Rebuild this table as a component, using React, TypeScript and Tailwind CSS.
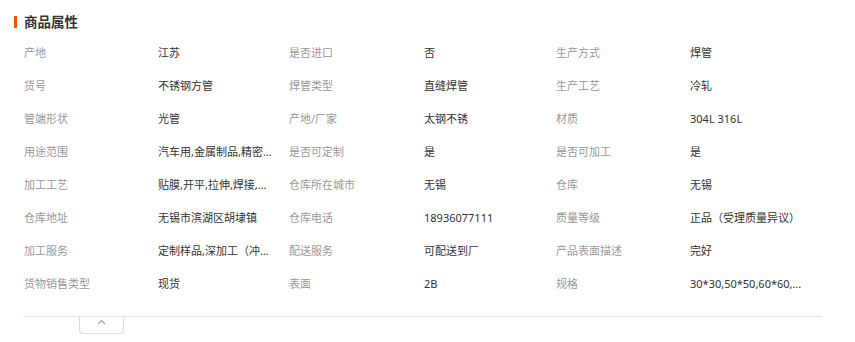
import React from "react";

const rows: string[][] = [
  ["产地", "江苏", "是否进口", "否", "生产方式", "焊管"],
  ["货号", "不锈钢方管", "焊管类型", "直缝焊管", "生产工艺", "冷轧"],
  ["管端形状", "光管", "产地/厂家", "太钢不锈", "材质", "304L 316L"],
  ["用途范围", "汽车用,金属制品,精密仪器,装饰", "是否可定制", "是", "是否可加工", "是"],
  ["加工工艺", "贴膜,开平,拉伸,焊接,折弯", "仓库所在城市", "无锡", "仓库", "无锡"],
  ["仓库地址", "无锡市滨湖区胡埭镇", "仓库电话", "18936077111", "质量等级", "正品（受理质量异议）"],
  ["加工服务", "定制样品,深加工（冲压、切割）", "配送服务", "可配送到厂", "产品表面描述", "完好"],
  ["货物销售类型", "现货", "表面", "2B", "规格", "30*30,50*50,60*60,80*80,100*100"],
];

export default function App() {
  return (
    <div
      className="w-[855px] h-[342px] bg-white text-[11px] overflow-hidden"
      style={{ fontFamily: '"Noto Sans", "Noto Sans CJK SC", sans-serif' }}
    >
      {/* Title */}
      <div className="flex items-center h-[20px] mt-[12px] pl-[14px]">
        <span className="w-[3px] h-[12px] bg-[#ff5000]" />
        <h2 className="ml-[7px] text-[13.5px] font-bold text-[#333] leading-[20px]">商品属性</h2>
      </div>

      {/* Attribute table */}
      <div className="mt-[4px] pl-[24px]">
        {rows.map((row, i) => (
          <div
            key={i}
            className="grid grid-cols-[134px_131px_135px_132px_134px_132px] h-[33px] items-center"
          >
            {row.map((cell, j) => (
              <span
                key={j}
                className={`truncate leading-[16px] ${
                  j % 2 === 0 ? "text-[#999] pr-2" : "text-[#333] max-w-[116px]"
                }`}
              >
                {cell}
              </span>
            ))}
          </div>
        ))}
      </div>

      {/* Footer line with collapse button */}
      <div className="mt-[16px] ml-[23px] w-[799px] border-t border-[#e5e5e5]">
        <button className="ml-[56px] w-[45px] h-[17px] border border-t-0 border-[#dddddd] rounded-b-[4px] flex items-start justify-center pt-[2px]">
          <svg width="9" height="6" viewBox="0 0 9 6" fill="none">
            <path d="M1 5L4.5 1.5L8 5" stroke="#9aa0a8" strokeWidth="1.1" />
          </svg>
        </button>
      </div>
    </div>
  );
}
